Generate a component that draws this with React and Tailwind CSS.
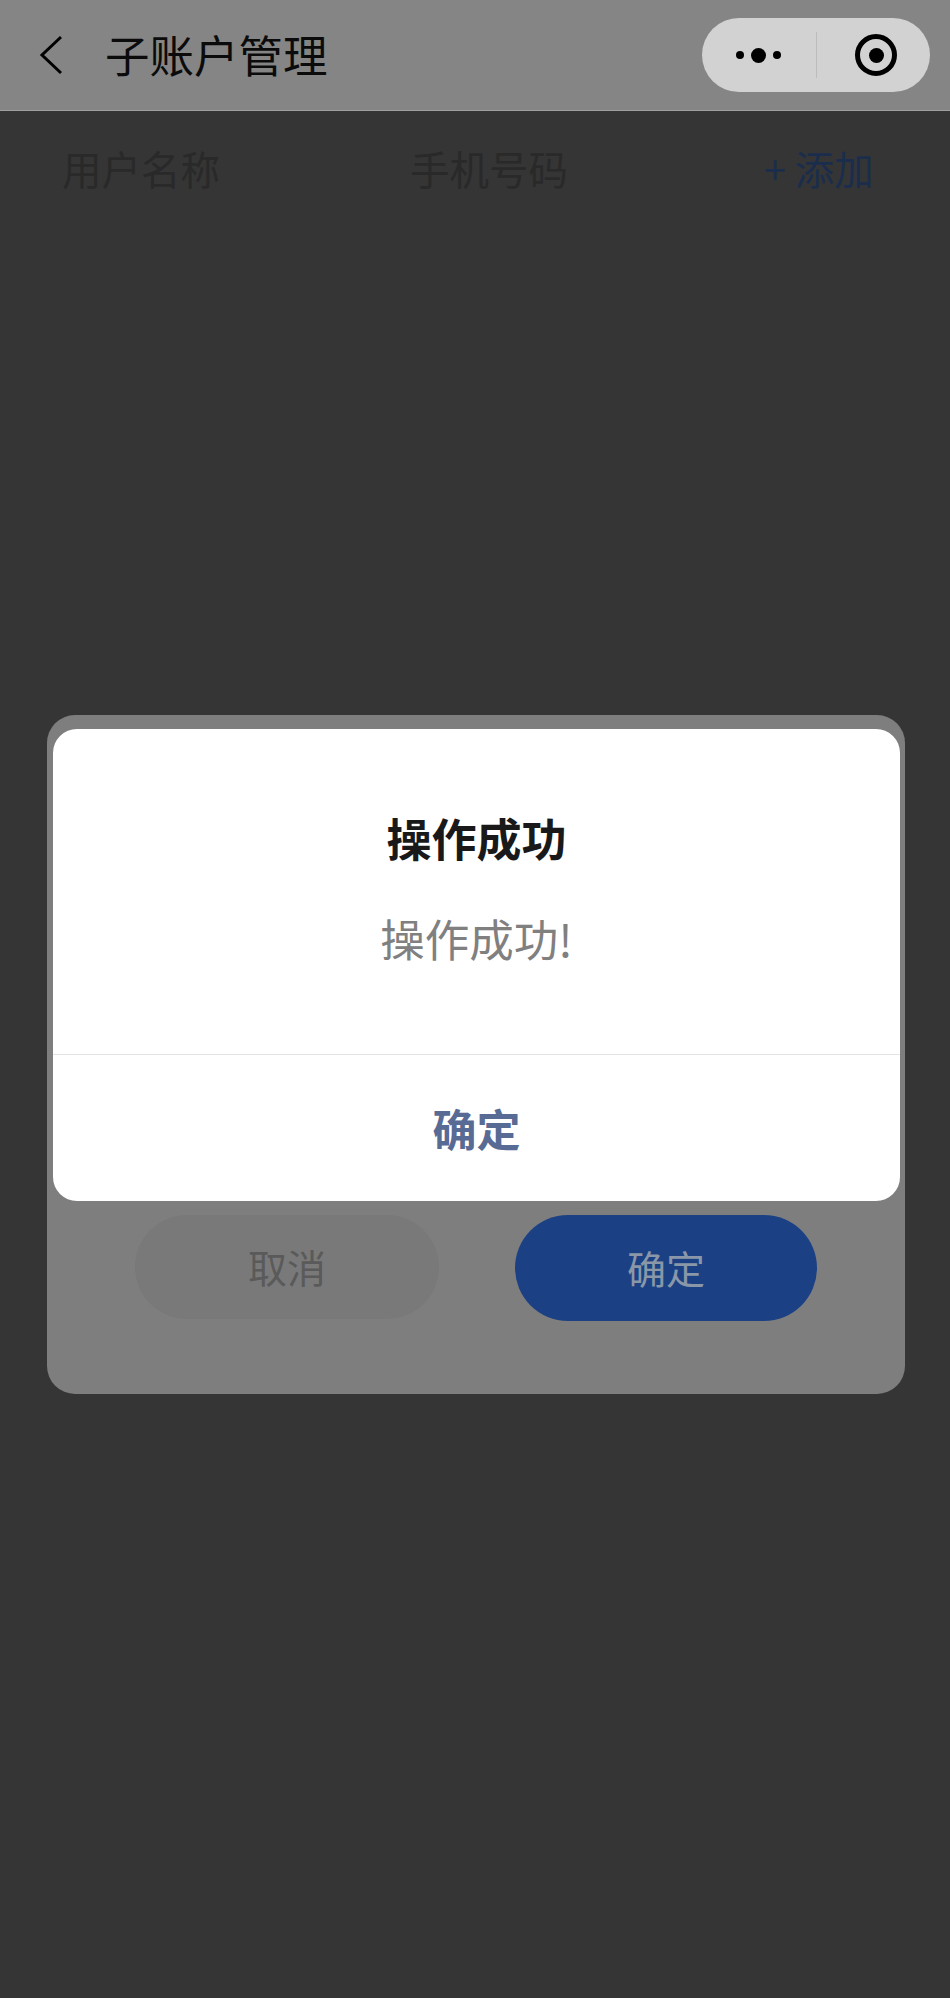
import React from "react"

const font = { fontFamily: '"Noto Sans CJK SC", "Liberation Sans", sans-serif' }

function CapsuleMenu() {
  return (
    <div className="flex h-[74px] w-[228px] items-center rounded-full bg-[#d2d2d2] pl-[34px]">
      <div className="flex items-center gap-[7px]">
        <span className="h-[8px] w-[8px] rounded-full bg-black" />
        <span className="h-[15px] w-[15px] rounded-full bg-black" />
        <span className="h-[8px] w-[8px] rounded-full bg-black" />
      </div>
      <div className="ml-[35px] mr-[38px] h-[46px] w-px bg-[#bcbcbc]" />
      <div className="flex h-[42px] w-[42px] items-center justify-center rounded-full border-[5px] border-black">
        <span className="h-[15px] w-[15px] rounded-full bg-black" />
      </div>
    </div>
  )
}

export default function App() {
  return (
    <div style={font} className="relative h-[1998px] w-[950px] overflow-hidden bg-[#353535]">
      {/* Header */}
      <div className="flex h-[111px] items-center justify-between border-b border-[#a0a0a0] bg-[#858585] pl-[39px] pr-[20px]">
        <div className="flex items-center">
          <svg width="23" height="40" viewBox="0 0 23 40" fill="none" className="mr-[43px]">
            <path d="M22 2 L3 20 L22 38" stroke="black" strokeWidth="3" />
          </svg>
          <span className="mt-[-2px] text-[44.5px] leading-[56px] text-[#0b0b0b]">子账户管理</span>
        </div>
        <CapsuleMenu />
      </div>

      {/* Table head */}
      <div className="flex h-[114px] items-center pl-[62px] text-[39.5px] leading-[50px] text-[#292929]">
        <span className="w-[348px]">用户名称</span>
        <span className="w-[354px]">手机号码</span>
        <span className="text-[#1b2d4c]">+ 添加</span>
      </div>

      {/* Form dialog behind */}
      <div className="absolute left-[47px] top-[715px] flex h-[679px] w-[858px] items-start justify-center gap-[76px] rounded-[28px] bg-[#7e7e7e] pt-[500px]">
        <div className="flex h-[104px] w-[304px] items-center justify-center rounded-full bg-[#797979] pb-[2px] text-[39px] text-[#5a5a5a]">取消</div>
        <div className="flex h-[106px] w-[302px] items-center justify-center rounded-full bg-[#1b4184] pb-[2px] text-[39px] text-[#8a97a8]">确定</div>
      </div>

      {/* Success dialog */}
      <div className="absolute left-[53px] top-[729px] flex h-[472px] w-[847px] flex-col rounded-[24px] bg-white">
        <div className="flex h-[325px] flex-col items-center pt-[80px]">
          <div className="text-[45px] font-bold leading-[58px] text-[#191919]">操作成功</div>
          <div className="mt-[42px] text-[44.5px] leading-[58px] text-[#808080]">操作成功!</div>
        </div>
        <div className="flex flex-1 items-center justify-center border-t border-[#e4e4e4] text-[44px] font-bold text-[#576b95]">确定</div>
      </div>
    </div>
  )
}
